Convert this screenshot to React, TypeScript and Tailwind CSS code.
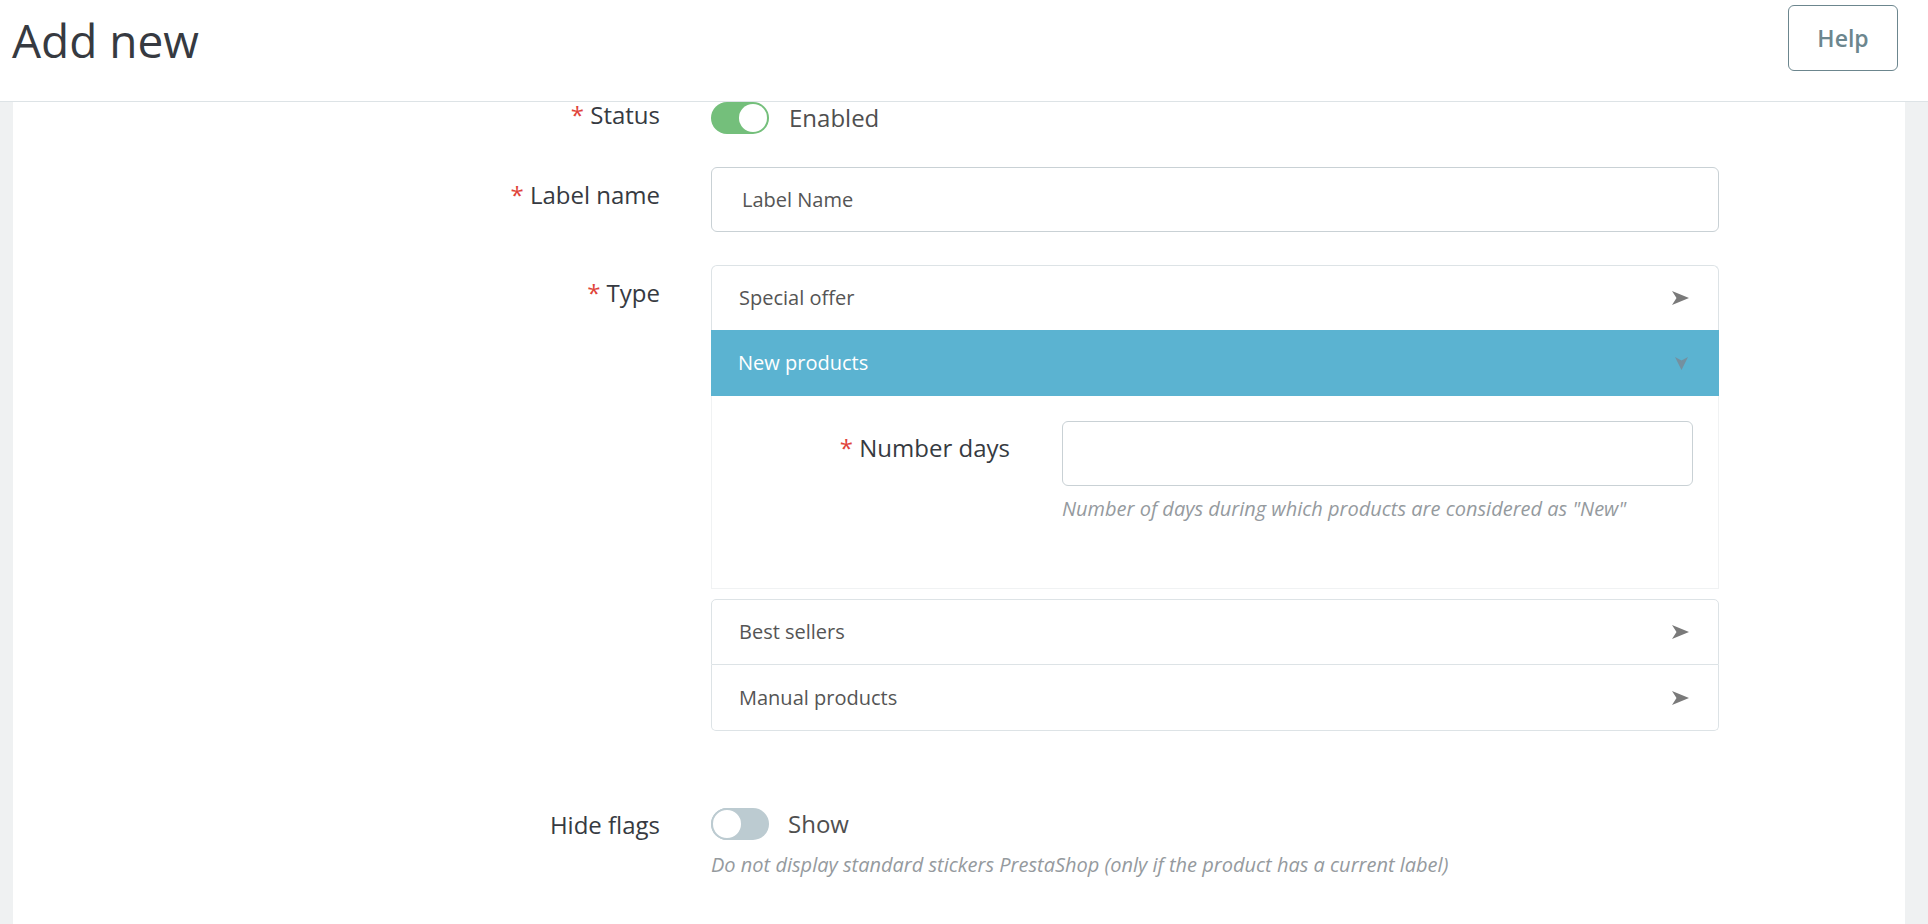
import React from "react";

function Arrow() {
  return (
    <svg width="17" height="14" viewBox="0 0 17 14" className="shrink-0">
      <path d="M0 0 L17 7 L0 14 L4.5 7 Z" fill="#7a7a7a" />
    </svg>
  );
}

function ArrowDown() {
  return (
    <svg width="13" height="13" viewBox="0 0 13 13" className="shrink-0">
      <path d="M0 0 L6.5 13 L13 0 L6.5 3.5 Z" fill="#7490a0" />
    </svg>
  );
}

function Req({ children }: { children: React.ReactNode }) {
  return (
    <>
      <span className="text-[#e0443a]">*</span> {children}
    </>
  );
}

function Toggle({ on }: { on: boolean }) {
  return on ? (
    <div className="w-[58px] h-[32px] rounded-full bg-[#74bf7b] flex items-center justify-end p-[2px] shrink-0">
      <div className="w-[28px] h-[28px] rounded-full bg-white" />
    </div>
  ) : (
    <div className="w-[58px] h-[32px] rounded-full bg-[#bccbd1] flex items-center justify-start shrink-0">
      <div className="w-[32px] h-[32px] rounded-full bg-white border-2 border-[#bccbd1]" />
    </div>
  );
}

export default function App() {
  return (
    <div className="w-[1928px] h-[924px] overflow-hidden bg-white flex flex-col font-['Open_Sans',sans-serif] text-[#363a41]">
      <header className="h-[102px] shrink-0 border-b border-[#dde3e6] flex items-start justify-between pl-[12px] pr-[30px] bg-white">
        <h1 className="text-[46px] leading-[60px] mt-[10px] font-normal text-[#363a41]">Add new</h1>
        <button className="mt-[5px] w-[110px] h-[66px] border border-[#6c868e] rounded-[6px] text-[#6c868e] font-semibold text-[23px] bg-white">
          Help
        </button>
      </header>
      <div className="flex-1 flex">
        <div className="w-[13px] bg-[#eff1f2]" />
        <main className="flex-1 bg-white flex flex-col">
          {/* Status */}
          <div className="flex">
            <div className="w-[647px] text-right text-[24px] leading-[26px]">
              <Req>Status</Req>
            </div>
            <div className="ml-[51px] w-[1008px] flex items-center h-[32px]">
              <Toggle on />
              <span className="ml-[20px] text-[24px] leading-[32px] text-[#4f4f4f]">Enabled</span>
            </div>
          </div>
          {/* Label name */}
          <div className="flex mt-[33px]">
            <div className="w-[647px] text-right text-[24px] leading-[26px] pt-[15px]">
              <Req>Label name</Req>
            </div>
            <div className="ml-[51px] w-[1008px]">
              <input
                readOnly
                defaultValue="Label Name"
                className="w-full h-[65px] border border-[#c9d1d5] rounded-[6px] px-[30px] text-[20px] text-[#555] outline-none font-['Open_Sans',sans-serif]"
              />
            </div>
          </div>
          {/* Type */}
          <div className="flex mt-[33px]">
            <div className="w-[647px] text-right text-[24px] leading-[26px] pt-[15px]">
              <Req>Type</Req>
            </div>
            <div className="ml-[51px] w-[1008px] flex flex-col">
              <div className="h-[65px] border border-[#dde3e6] border-b-0 rounded-t-[6px] flex items-center justify-between pl-[27px] pr-[29px] text-[20px] text-[#555]">
                <span>Special offer</span>
                <Arrow />
              </div>
              <div className="h-[66px] bg-[#5bb3d1] flex items-center justify-between pl-[27px] pr-[31px] text-[20px] text-white">
                <span>New products</span>
                <ArrowDown />
              </div>
              <div className="h-[193px] border border-t-0 border-[#f0f2f3] flex pt-[25px]">
                <div className="w-[298px] text-right text-[24px] leading-[26px] pt-[14px]">
                  <Req>Number days</Req>
                </div>
                <div className="ml-[52px] w-[631px] flex flex-col">
                  <input
                    readOnly
                    className="w-full h-[65px] border border-[#c9d1d5] rounded-[6px] px-[20px] text-[20px] outline-none"
                  />
                  <div className="mt-[11px] text-[20px] leading-[24px] italic text-[#959a9e]">
                    Number of days during which products are considered as "New"
                  </div>
                </div>
              </div>
              <div className="mt-[10px] h-[66px] border border-[#dde3e6] rounded-t-[5px] flex items-center justify-between pl-[27px] pr-[29px] text-[20px] text-[#555]">
                <span>Best sellers</span>
                <Arrow />
              </div>
              <div className="h-[66px] border border-t-0 border-[#dde3e6] rounded-b-[5px] flex items-center justify-between pl-[27px] pr-[29px] text-[20px] text-[#555]">
                <span>Manual products</span>
                <Arrow />
              </div>
            </div>
          </div>
          {/* Hide flags */}
          <div className="flex mt-[77px]">
            <div className="w-[647px] text-right text-[24px] leading-[26px] pt-[4px]">Hide flags</div>
            <div className="ml-[51px] w-[1008px] flex flex-col">
              <div className="flex items-center h-[32px]">
                <Toggle on={false} />
                <span className="ml-[19px] text-[24px] leading-[32px] text-[#4f4f4f]">Show</span>
              </div>
              <div className="mt-[13px] text-[20px] leading-[24px] italic text-[#959a9e]">
                Do not display standard stickers PrestaShop (only if the product has a current label)
              </div>
            </div>
          </div>
        </main>
        <div className="w-[23px] bg-[#eff1f2]" />
      </div>
    </div>
  );
}
